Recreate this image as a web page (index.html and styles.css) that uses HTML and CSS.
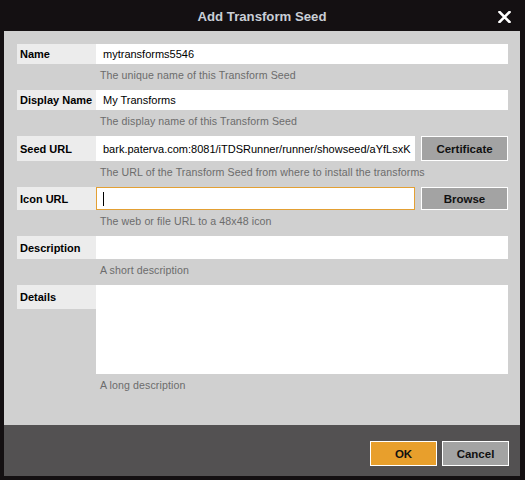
FILE: index.html
```html
<!DOCTYPE html>
<html>
<head>
<meta charset="utf-8">
<link rel="stylesheet" href="styles.css">
</head>
<body>
<div class="dialog">
  <div class="titlebar">
    <span class="title">Add Transform Seed</span>
    <span class="close">
      <svg width="13" height="12" viewBox="0 0 13 12"><path d="M1.5 1 L11.5 11 M11.5 1 L1.5 11" stroke="#ffffff" stroke-width="2.6" stroke-linecap="square"/></svg>
    </span>
  </div>
  <div class="content">
    <div class="group">
      <div class="row h20">
        <div class="label">Name</div>
        <div class="input">mytransforms5546</div>
      </div>
      <div class="hint">The unique name of this Transform Seed</div>
    </div>
    <div class="group">
      <div class="row h20">
        <div class="label">Display Name</div>
        <div class="input">My Transforms</div>
      </div>
      <div class="hint">The display name of this Transform Seed</div>
    </div>
    <div class="group">
      <div class="row h25">
        <div class="label">Seed URL</div>
        <div class="input narrow">bark.paterva.com:8081/iTDSRunner/runner/showseed/aYfLsxK</div>
        <button class="btn side">Certificate</button>
      </div>
      <div class="hint">The URL of the Transform Seed from where to install the transforms</div>
    </div>
    <div class="group">
      <div class="row h23">
        <div class="label">Icon URL</div>
        <div class="input narrow focus"><span class="caret"></span></div>
        <button class="btn side">Browse</button>
      </div>
      <div class="hint">The web or file URL to a 48x48 icon</div>
    </div>
    <div class="group">
      <div class="row h23">
        <div class="label">Description</div>
        <div class="input"></div>
      </div>
      <div class="hint">A short description</div>
    </div>
    <div class="group">
      <div class="row tall">
        <div class="label top">Details</div>
        <div class="input area"></div>
      </div>
      <div class="hint">A long description</div>
    </div>
  </div>
  <div class="footer">
    <button class="btn ok">OK</button>
    <button class="btn cancel">Cancel</button>
  </div>
</div>
</body>
</html>
```
FILE: styles.css
```css
* { box-sizing: border-box; }
html, body { margin: 0; padding: 0; }
body {
  width: 525px;
  height: 480px;
  background: #141012;
  font-family: "Liberation Sans", Arial, sans-serif;
  font-size: 11px;
  color: #000;
}
.dialog {
  width: 525px;
  height: 480px;
  background: #141012;
  padding: 0 5px 4px 4px;
  display: flex;
  flex-direction: column;
}
.titlebar {
  height: 31px;
  display: flex;
  align-items: center;
  justify-content: center;
  position: relative;
}
.title {
  color: #c9ced6;
  font-weight: bold;
  font-size: 13.2px;
  margin-top: 1px;
}
.close {
  position: absolute;
  right: 9px;
  top: 11px;
  width: 13px;
  height: 12px;
  display: block;
}
.close svg { display: block; }
.content {
  background: #d0d0d0;
  height: 394px;
  padding: 13px 12px 0 13px;
  display: flex;
  flex-direction: column;
}
.group { display: flex; flex-direction: column; }
.row { display: flex; align-items: stretch; }
.h20 { height: 20px; }
.h23 { height: 23px; }
.h25 { height: 25px; }
.tall { height: 89px; align-items: flex-start; }
.label {
  width: 79px;
  flex: none;
  background: #ececec;
  font-weight: bold;
  padding-left: 3px;
  display: flex;
  align-items: center;
  white-space: nowrap;
}
.label.top {
  height: 24px;
  align-items: flex-start;
  padding-top: 6px;
}
.input {
  flex: 1;
  background: #fff;
  padding-left: 7px;
  display: flex;
  align-items: center;
  white-space: nowrap;
  overflow: hidden;
}
.input.narrow { flex: none; width: 319px; }
.input.area { height: 89px; }
.input.focus { border: 1px solid #e3a034; padding-left: 6px; }
.caret {
  display: block;
  width: 1px;
  height: 14px;
  background: #000;
}
.hint {
  color: #6c6c6c;
  height: 26px;
  padding: 5px 0 0 83px;
  line-height: 13px;
  font-size: 10.6px;
  letter-spacing: 0.1px;
}
.btn {
  font-family: "Liberation Sans", Arial, sans-serif;
  font-weight: bold;
  font-size: 11.5px;
  color: #111;
  border: 1px solid #ffffff;
  background: #a3a3a3;
  padding: 0;
  margin: 0;
}
.side {
  width: 87px;
  margin-left: 6px;
}
.footer {
  flex: 1;
  background: #535152;
  display: flex;
  justify-content: flex-end;
  align-items: flex-end;
  padding: 0 11px 10px 0;
  gap: 5px;
}
.footer .btn { width: 67px; height: 25px; }
.ok { background: #e89f2c; }
.cancel { background: #a3a3a3; }
```
